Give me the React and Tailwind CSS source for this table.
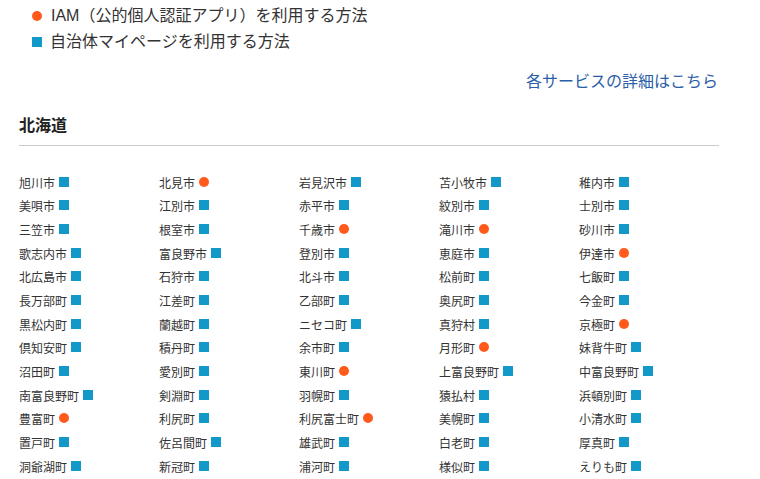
const cities = [
  ["旭川市", "s"], ["北見市", "c"], ["岩見沢市", "s"], ["苫小牧市", "s"], ["稚内市", "s"],
  ["美唄市", "s"], ["江別市", "s"], ["赤平市", "s"], ["紋別市", "s"], ["士別市", "s"],
  ["三笠市", "s"], ["根室市", "s"], ["千歳市", "c"], ["滝川市", "c"], ["砂川市", "s"],
  ["歌志内市", "s"], ["富良野市", "s"], ["登別市", "s"], ["恵庭市", "s"], ["伊達市", "c"],
  ["北広島市", "s"], ["石狩市", "s"], ["北斗市", "s"], ["松前町", "s"], ["七飯町", "s"],
  ["長万部町", "s"], ["江差町", "s"], ["乙部町", "s"], ["奥尻町", "s"], ["今金町", "s"],
  ["黒松内町", "s"], ["蘭越町", "s"], ["ニセコ町", "s"], ["真狩村", "s"], ["京極町", "c"],
  ["倶知安町", "s"], ["積丹町", "s"], ["余市町", "s"], ["月形町", "c"], ["妹背牛町", "s"],
  ["沼田町", "s"], ["愛別町", "s"], ["東川町", "c"], ["上富良野町", "s"], ["中富良野町", "s"],
  ["南富良野町", "s"], ["剣淵町", "s"], ["羽幌町", "s"], ["猿払村", "s"], ["浜頓別町", "s"],
  ["豊富町", "c"], ["利尻町", "s"], ["利尻富士町", "c"], ["美幌町", "s"], ["小清水町", "s"],
  ["置戸町", "s"], ["佐呂間町", "s"], ["雄武町", "s"], ["白老町", "s"], ["厚真町", "s"],
  ["洞爺湖町", "s"], ["新冠町", "s"], ["浦河町", "s"], ["様似町", "s"], ["えりも町", "s"],
];

const Circle = ({ className = "" }) => (
  <span className={`inline-block w-[10px] h-[10px] rounded-full bg-[#ff5a1c] ${className}`} />
);

const Square = ({ className = "" }) => (
  <span className={`inline-block w-[10px] h-[10px] bg-[#1399c9] ${className}`} />
);

const App = () => {
  return (
    <div
      className="w-[760px] h-[479px] overflow-hidden bg-white text-[#333]"
      style={{ fontFamily: '"Liberation Sans", "Noto Sans CJK JP", sans-serif' }}
    >
      <div className="w-[700px] ml-[19px] pt-[3px]">
        <ul className="text-[16px] leading-[26px]">
          <li className="flex items-center">
            <Circle className="ml-[13px] mr-[9px]" />
            IAM（公的個人認証アプリ）を利用する方法
          </li>
          <li className="flex items-center">
            <Square className="ml-[13px] mr-[8px]" />
            自治体マイページを利用する方法
          </li>
        </ul>

        <div className="mt-[16px] text-right text-[16px] leading-[22px]">
          <a href="#" className="text-[#2b5ea9] mr-[1px]">
            各サービスの詳細はこちら
          </a>
        </div>

        <h2 className="mt-[21px] pb-[7px] border-b border-[#cccccc] text-[16px] leading-[24px] font-bold text-[#222]">
          北海道
        </h2>

        <div className="grid grid-cols-5 mt-[26px]">
          {cities.map(([name, type]) => (
            <div key={name} className="flex items-center h-[23.67px] text-[12px]">
              <span>{name}</span>
              {type === "c" ? (
                <Circle className="ml-[4px] mb-[4px]" />
              ) : (
                <Square className="ml-[4px] mb-[4px]" />
              )}
            </div>
          ))}
        </div>
      </div>
    </div>
  );
};

export default App;
